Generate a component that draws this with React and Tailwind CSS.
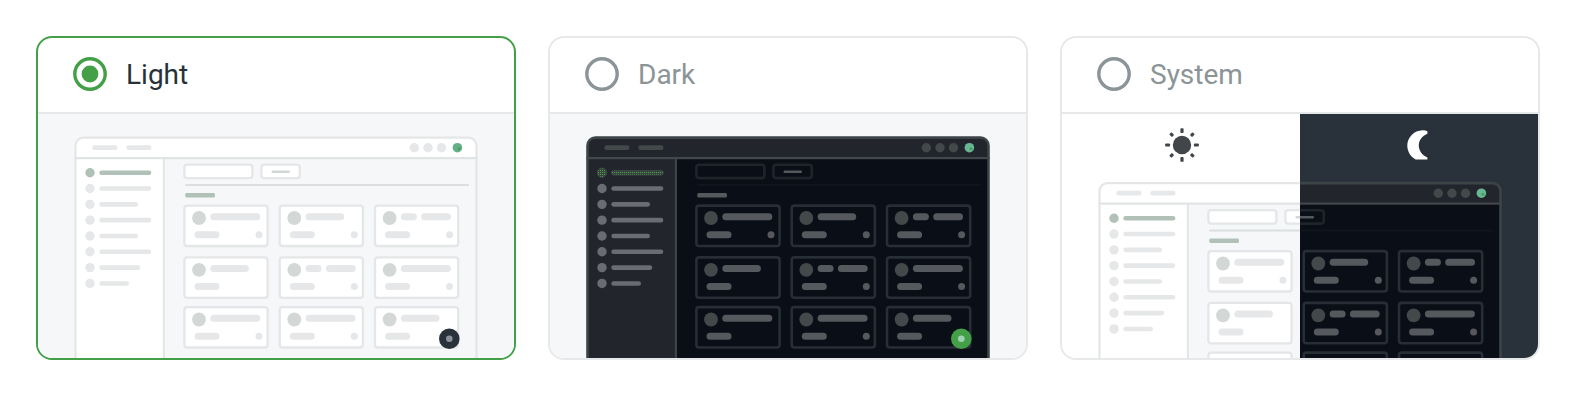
import React, { useId } from "react";

const light = {
  frame: "#e4e6e8",
  divider: "#e1e4e5",
  header: "#ffffff",
  side: "#ffffff",
  body: "#f5f7f9",
  navBar: "#e6e8ea",
  sideBar: "#e5e7e8",
  dot: "#e5e7e9",
  active: "#b1c1b7",
  label: "#b1c1b7",
  field: "#ffffff",
  fieldBorder: "#e4e6e8",
  dash: "#d3d8d6",
  rule: "#dcdfe0",
  tile: "#ffffff",
  tileBorder: "#e4e6e8",
  avatar: "#d3d8d6",
  bar: "#e5e7e8",
  accent: "#62af8a",
  fab: "#29323a",
  fabDot: "#8b9196",
  stroke: 2.3,
};

const dark = {
  frame: "#3d4448",
  divider: "#42474b",
  header: "#22252c",
  side: "#22252c",
  body: "#0a0e17",
  navBar: "#43484a",
  sideBar: "#696c70",
  dot: "#43484a",
  active: "#3b8a40",
  label: "#55585d",
  field: "#0a0e17",
  fieldBorder: "#1f232a",
  dash: "#55585d",
  rule: "#10141c",
  tile: "#0a0e17",
  tileBorder: "#272e35",
  avatar: "#43484a",
  bar: "#55585d",
  accent: "#66b795",
  fab: "#43a047",
  fabDot: "#9fd0b4",
  stroke: 2.6,
};

const navWidths = [52, 52, 38.7, 52, 38.7, 52, 41, 29.7];
const columns = [146.4, 241.7, 337];
const rows = [91.6, 143.4, 193.1];
const titles = [
  ["long", "short", "split"],
  ["short", "split", "long"],
  ["long", "long", "short"],
];

function Bar({ x, y, w, h, fill }) {
  return <rect x={x} y={y} width={w} height={h} rx={h / 2} fill={fill} />;
}

function Tile({ x, y, title, dot, c }) {
  return (
    <g transform={`translate(${x} ${y})`}>
      <rect width="83.2" height="40.4" rx="2.8" fill={c.tile} stroke={c.tileBorder} strokeWidth={c.stroke} />
      <circle cx="14.6" cy="12.4" r="6.9" fill={c.avatar} />
      {title === "split" ? (
        <>
          <Bar x={25.9} y={7.6} w={16} h={7} fill={c.bar} />
          <Bar x={46.2} y={7.6} w={29.8} h={7} fill={c.bar} />
        </>
      ) : (
        <Bar x={25.9} y={7.6} w={title === "long" ? 50 : 38.6} h={7} fill={c.bar} />
      )}
      <Bar x={10.1} y={25.6} w={25} h={7} fill={c.bar} />
      {dot && <circle cx="74.6" cy="29.1" r="3.5" fill={c.bar} />}
    </g>
  );
}

function AppPreview({ c, dy = 0, className = "" }) {
  const id = useId();
  const isDark = c === dark;
  const activeFill = isDark ? `url(#${id}stipple)` : c.active;
  return (
    <svg className={`block shrink-0 ${className}`} width="476" height="244" viewBox={`0 ${dy} 476 244`} aria-hidden="true">
      <defs>
        <clipPath id={`${id}clip`}>
          <rect x="37.3" y="23.4" width="401.4" height="300" rx="8" />
        </clipPath>
        <pattern id={`${id}stipple`} width="2" height="2" patternUnits="userSpaceOnUse">
          <rect width="2" height="2" fill="#39423f" />
          <rect width="1" height="1" fill="#3fae3f" />
        </pattern>
      </defs>
      <g clipPath={`url(#${id}clip)`}>
        <rect x="36" y="22" width="404" height="302" fill={c.body} />
        <rect x="36" y="22" width="404" height="22" fill={c.header} />
        <rect x="36" y="44" width="89" height="280" fill={c.side} />
        <rect x="124.8" y="44" width="2.2" height="280" fill={c.frame} />
      </g>
      <rect x="37.5" y="23.6" width="401" height="300" rx="8" fill="none" stroke={c.frame} strokeWidth={c.stroke} />
      <rect x="36.5" y="43" width="403" height="2.2" fill={c.divider} />

      <Bar x={54.3} y={31.3} w={25.2} h={4.7} fill={c.navBar} />
      <Bar x={88.3} y={31.3} w={25.2} h={4.7} fill={c.navBar} />
      {[376.3, 390, 403.5].map((x) => (
        <circle key={x} cx={x} cy="33.7" r="4.7" fill={c.dot} />
      ))}
      <circle cx="419.4" cy="33.7" r="4.8" fill={c.accent} />
      <circle cx="421" cy="34.8" r="1.4" fill="#43a047" />

      {navWidths.map((w, i) => (
        <g key={i}>
          <circle
            cx="52"
            cy={58.7 + i * 15.82}
            r="4.7"
            fill={i === 0 ? activeFill : c.sideBar}
            stroke={i === 0 && isDark ? "#3f4447" : "none"}
          />
          <rect
            x="61.3"
            y={56.4 + i * 15.82}
            width={w}
            height="4.6"
            rx="2.3"
            fill={i === 0 ? activeFill : c.sideBar}
            stroke={i === 0 && isDark ? "#3f4447" : "none"}
          />
        </g>
      ))}

      <rect x="146.4" y="50.7" width="68" height="13.4" rx="2.8" fill={c.field} stroke={c.fieldBorder} strokeWidth={c.stroke} />
      <rect x="223.4" y="50.7" width="38.4" height="13.4" rx="2.8" fill={c.field} stroke={c.fieldBorder} strokeWidth={c.stroke} />
      <Bar x={233.5} y={56.4} w={18.5} h={2.5} fill={c.dash} />
      <rect x="147.3" y="70" width="283.500" height="2" fill={c.rule} />
      <rect x="147.3" y="79" width="29.6" height="4.6" rx="1.4" fill={c.label} />

      {rows.map((y, r) =>
        columns.map((x, k) => (
          <Tile
            key={`${r}-${k}`}
            x={x}
            y={y}
            c={c}
            title={titles[r][k]}
            dot={!(r === 1 && k === 0) && !(r === 2 && k === 2) && !(isDark && r === 2 && k === 0)}
          />
        ))
      )}
      <circle cx="411.3" cy="224.7" r="10.3" fill={c.fab} />
      <circle cx="411.3" cy="224.7" r="3.3" fill={c.fabDot} />
    </svg>
  );
}

function Sun() {
  return (
    <svg width="36" height="36" viewBox="-18 -18 36 36" aria-hidden="true">
      <circle r="9.2" fill="#42464b" />
      {[0, 45, 90, 135, 180, 225, 270, 315].map((a) => (
        <rect
          key={a}
          x="-1.6"
          y={a % 90 ? -16.6 : -16.8}
          width="3.2"
          height={a % 90 ? 4 : 4.8}
          rx="0.9"
          fill="#40454a"
          transform={`rotate(${a})`}
        />
      ))}
    </svg>
  );
}

function Moon() {
  return (
    <svg width="21" height="30" viewBox="0 0 21 30" aria-hidden="true">
      <path
        fill="#ffffff"
        d="M20.4 1.2v2.6C15.200 6 11.800 10.200 11.800 15.600s3.600 9.800 8.600 12v2H8.600C3.600 26.800.3 21.700.3 15.600.3 7.200 7 .5 15.400.2c1.800-.1 3.500.2 5 1Z"
      />
    </svg>
  );
}

function Radio({ selected }) {
  const color = selected ? "#43a047" : "#8b9496";
  return (
    <svg className="shrink-0" width="34" height="34" viewBox="0 0 34 34" aria-hidden="true">
      <circle cx="17" cy="17" r="15.2" fill="none" stroke={color} strokeWidth="3.400" />
      {selected && <circle cx="17" cy="17" r="8.400" fill={color} />}
    </svg>
  );
}

function Option({ label, selected = false, children }) {
  return (
    <label
      className={`flex h-[324px] w-[480px] shrink-0 flex-col overflow-hidden rounded-2xl border-2 bg-white ${
        selected ? "border-[#43a047]" : "border-[#e6e8ea]"
      }`}
    >
      <div className="flex h-[76px] shrink-0 items-center gap-[19px] border-b-2 border-[#e6e8ea] pr-8 pb-0.5 pl-[35px]">
        <Radio selected={selected} />
        <span
          className={`pt-0.5 font-[Roboto,sans-serif] text-[28px] leading-8 ${
            selected ? "text-[#263238]" : "text-[#8b9496]"
          }`}
        >
          {label}
        </span>
      </div>
      {children}
    </label>
  );
}

export default function App() {
  return (
    <main className="flex h-[420px] w-[1587px] items-start gap-8 overflow-hidden bg-white p-9">
      <Option label="Light" selected>
        <div className="flex-1 overflow-hidden bg-[#f5f7f9]">
          <AppPreview c={light} />
        </div>
      </Option>
      <Option label="Dark">
        <div className="flex-1 overflow-hidden bg-[#f5f7f9]">
          <AppPreview c={dark} />
        </div>
      </Option>
      <Option label="System">
        <div className="grid flex-1 grid-cols-2 overflow-hidden">
          <div className="flex h-[244px] flex-col items-start overflow-hidden bg-white">
            <div className="flex h-[62px] w-full shrink-0 items-center justify-center pl-0.5">
              <Sun />
            </div>
            <AppPreview c={light} dy={16.5} />
          </div>
          <div className="flex h-[244px] flex-col items-start overflow-hidden bg-[#29323a]">
            <div className="flex h-[62px] w-full shrink-0 items-center justify-center pr-[3px]">
              <Moon />
            </div>
            <AppPreview c={dark} dy={16.5} className="-ml-[238px]" />
          </div>
        </div>
      </Option>
    </main>
  );
}
